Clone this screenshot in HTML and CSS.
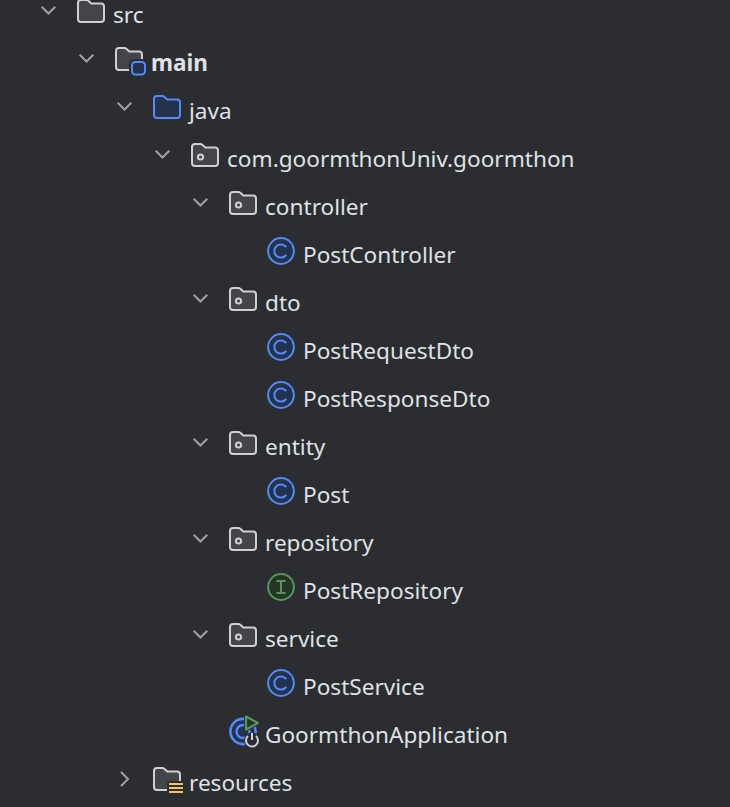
FILE: index.html
```html
<!DOCTYPE html>
<html lang="en">
<head>
<meta charset="utf-8">
<title>Project tree</title>
<link rel="stylesheet" href="styles.css">
</head>
<body>
<svg class="defs" width="0" height="0" aria-hidden="true">
  <defs>
    <symbol id="chev-down" viewBox="0 0 28 28"><path d="M5.7 9.7l6.8 6.8 6.8-6.8" fill="none" stroke="currentColor" stroke-width="2"/></symbol>
    <symbol id="chev-right" viewBox="0 0 28 28"><path d="M9 7l7 7-7 7" fill="none" stroke="currentColor" stroke-width="2"/></symbol>
    <symbol id="folder" viewBox="0 0 28 28"><path d="M1 6a3 3 0 0 1 3-3h5.3a3 3 0 0 1 2 .8l3 2.7h9.7a3 3 0 0 1 3 3V22a3 3 0 0 1-3 3H4a3 3 0 0 1-3-3z" fill="#43454a" stroke="#ced0d6" stroke-width="2"/></symbol>
    <symbol id="folder-blue" viewBox="0 0 28 28"><path d="M1 6a3 3 0 0 1 3-3h5.3a3 3 0 0 1 2 .8l3 2.7h9.7a3 3 0 0 1 3 3V22a3 3 0 0 1-3 3H4a3 3 0 0 1-3-3z" fill="#25324d" stroke="#548af7" stroke-width="2"/></symbol>
    <symbol id="package" viewBox="0 0 28 28"><path d="M1 6a3 3 0 0 1 3-3h5.3a3 3 0 0 1 2 .8l3 2.7h9.7a3 3 0 0 1 3 3V22a3 3 0 0 1-3 3H4a3 3 0 0 1-3-3z" fill="#43454a" stroke="#ced0d6" stroke-width="2"/><circle cx="9.5" cy="16" r="2.6" fill="none" stroke="#ced0d6" stroke-width="2"/></symbol>
    <symbol id="class" viewBox="0 0 28 28"><circle cx="14" cy="14" r="12.9" fill="#25324d" stroke="#548af7" stroke-width="2"/><path d="M19.3 10.2a6.6 6.6 0 1 0 0 7.6" fill="none" stroke="#548af7" stroke-width="2"/></symbol>
    <symbol id="interface" viewBox="0 0 28 28"><circle cx="14" cy="14" r="12.9" fill="#253627" stroke="#57965c" stroke-width="2"/><path d="M9.5 8h9M9.5 20h9M14 8v12" fill="none" stroke="#57965c" stroke-width="2"/></symbol>
  </defs>
</svg>
<main class="tree">
  <div class="row d0"><svg class="chev"><use href="#chev-down"/></svg><svg class="icon"><use href="#folder"/></svg><span class="label">src</span></div>
  <div class="row d1"><svg class="chev"><use href="#chev-down"/></svg><span class="stack"><svg class="icon"><use href="#folder"/></svg><svg class="badge" viewBox="0 0 18 18"><rect x="0" y="0" width="18" height="18" rx="5" fill="#2b2d30"/><rect x="3" y="3" width="13" height="12.5" rx="3.5" fill="#25324d" stroke="#548af7" stroke-width="2"/></svg></span><span class="label bold">main</span></div>
  <div class="row d2"><svg class="chev"><use href="#chev-down"/></svg><svg class="icon"><use href="#folder-blue"/></svg><span class="label">java</span></div>
  <div class="row d3"><svg class="chev"><use href="#chev-down"/></svg><svg class="icon"><use href="#package"/></svg><span class="label">com.goormthonUniv.goormthon</span></div>
  <div class="row d4"><svg class="chev"><use href="#chev-down"/></svg><svg class="icon"><use href="#package"/></svg><span class="label">controller</span></div>
  <div class="row d5"><span class="chev"></span><svg class="icon"><use href="#class"/></svg><span class="label">PostController</span></div>
  <div class="row d4"><svg class="chev"><use href="#chev-down"/></svg><svg class="icon"><use href="#package"/></svg><span class="label">dto</span></div>
  <div class="row d5"><span class="chev"></span><svg class="icon"><use href="#class"/></svg><span class="label">PostRequestDto</span></div>
  <div class="row d5"><span class="chev"></span><svg class="icon"><use href="#class"/></svg><span class="label">PostResponseDto</span></div>
  <div class="row d4"><svg class="chev"><use href="#chev-down"/></svg><svg class="icon"><use href="#package"/></svg><span class="label">entity</span></div>
  <div class="row d5"><span class="chev"></span><svg class="icon"><use href="#class"/></svg><span class="label">Post</span></div>
  <div class="row d4"><svg class="chev"><use href="#chev-down"/></svg><svg class="icon"><use href="#package"/></svg><span class="label">repository</span></div>
  <div class="row d5"><span class="chev"></span><svg class="icon"><use href="#interface"/></svg><span class="label">PostRepository</span></div>
  <div class="row d4"><svg class="chev"><use href="#chev-down"/></svg><svg class="icon"><use href="#package"/></svg><span class="label">service</span></div>
  <div class="row d5"><span class="chev"></span><svg class="icon"><use href="#class"/></svg><span class="label">PostService</span></div>
  <div class="row d4"><span class="chev"></span><svg class="icon run" viewBox="0 0 34 34"><circle cx="14" cy="17.5" r="12.6" fill="#25324d" stroke="#548af7" stroke-width="2.6"/><circle cx="14" cy="17.5" r="6.5" fill="none" stroke="#548af7" stroke-width="2.4"/><path d="M17 2.5L29 9 17 15.5z" fill="#2b2d30" stroke="#2b2d30" stroke-width="4" stroke-linejoin="round"/><path d="M17 2.5L29 9 17 15.5z" fill="#253627" stroke="#57965c" stroke-width="2.2" stroke-linejoin="round"/><circle cx="23" cy="26.5" r="8" fill="#2b2d30"/><path d="M19 22a6 6 0 1 0 8 0M23 19v7" fill="none" stroke="#ced0d6" stroke-width="2"/></svg><span class="label">GoormthonApplication</span></div>
  <div class="row d2"><svg class="chev"><use href="#chev-right"/></svg><span class="stack"><svg class="icon"><use href="#folder"/></svg><svg class="badge" viewBox="0 0 18 18"><rect x="0" y="2" width="18" height="16" rx="3" fill="#2b2d30"/><path d="M2 5h14M2 9h14M2 13h14" fill="none" stroke="#f2c55c" stroke-width="2"/></svg></span><span class="label">resources</span></div>
</main>
</body>
</html>
```

FILE: styles.css
```css
html, body {
  margin: 0;
  height: 100%;
  overflow: hidden;
  background: #2b2d30;
}

.defs {
  display: block;
  height: 0;
}

.tree {
  display: flex;
  flex-direction: column;
  margin-top: -9px;
  font-family: "Noto Sans", "Liberation Sans", sans-serif;
  font-size: 22.6px;
  color: #dfe1e5;
}

.row {
  display: flex;
  align-items: center;
  height: 48px;
  flex: none;
}

.d0 { padding-left: 36px; }
.d1 { padding-left: 74px; }
.d2 { padding-left: 112px; }
.d3 { padding-left: 150px; }
.d4 { padding-left: 188px; }
.d5 { padding-left: 226px; }

.chev {
  display: block;
  flex: none;
  width: 28px;
  height: 28px;
  margin: 0 13px 8px 0;
  color: #9da0a8;
}

.icon {
  display: block;
  flex: none;
  width: 28px;
  height: 28px;
  margin: 0 8px 8px 0;
}

.icon.run {
  width: 34px;
  height: 34px;
  margin: 0 2px 8px 0;
}

.stack {
  position: relative;
  display: block;
  flex: none;
  width: 36px;
  height: 36px;
}

.badge {
  position: absolute;
  left: 14px;
  top: 14px;
  width: 18px;
  height: 18px;
}

.label {
  white-space: nowrap;
  margin-bottom: 2px;
}

.bold {
  font-weight: 700;
}
```
